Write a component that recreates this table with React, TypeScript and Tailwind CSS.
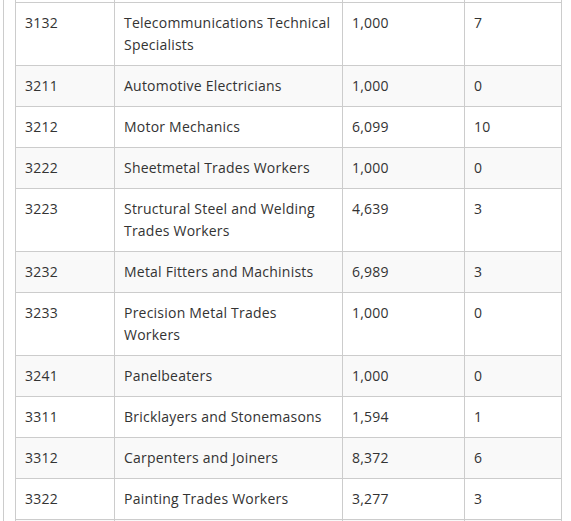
const rows: [string, string, string, string][] = [
  ['3132', 'Telecommunications Technical Specialists', '1,000', '7'],
  ['3211', 'Automotive Electricians', '1,000', '0'],
  ['3212', 'Motor Mechanics', '6,099', '10'],
  ['3222', 'Sheetmetal Trades Workers', '1,000', '0'],
  ['3223', 'Structural Steel and Welding Trades Workers', '4,639', '3'],
  ['3232', 'Metal Fitters and Machinists', '6,989', '3'],
  ['3233', 'Precision Metal Trades Workers', '1,000', '0'],
  ['3241', 'Panelbeaters', '1,000', '0'],
  ['3311', 'Bricklayers and Stonemasons', '1,594', '1'],
  ['3312', 'Carpenters and Joiners', '8,372', '6'],
  ['3322', 'Painting Trades Workers', '3,277', '3'],
]

const cell = 'border-r border-b border-[#cccccc] pl-[9px] pr-[9px] py-[9px] leading-[22px] tracking-[0.22px]'

export default function App() {
  return (
    <div
      className="h-[521px] overflow-hidden bg-white text-[14px] text-[#333333]"
      style={{ fontFamily: '"Open Sans", "Liberation Sans", sans-serif' }}
    >
      <div className="ml-[3px] h-full border-l border-[#cccccc] pl-[11px]">
        <div className="grid w-[547px] grid-cols-[99px_228px_122px_97px] border-l border-[#cccccc]">
          {/* tail of the row above */}
          {[0, 1, 2, 3].map((i) => (
            <div key={'top' + i} className="h-[3px] border-r border-b border-[#cccccc]" />
          ))}
          {rows.map((r, i) => {
            const bg = i % 2 === 1 ? 'bg-[#f9f9f9]' : 'bg-white'
            return r.map((v, j) => (
              <div key={r[0] + '-' + j} className={`${cell} ${bg}`}>
                {v}
              </div>
            ))
          })}
          {[0, 1, 2, 3].map((i) => (
            <div key={'bottom' + i} className="h-[40px] border-r border-[#cccccc] bg-[#f9f9f9]" />
          ))}
        </div>
      </div>
    </div>
  )
}
